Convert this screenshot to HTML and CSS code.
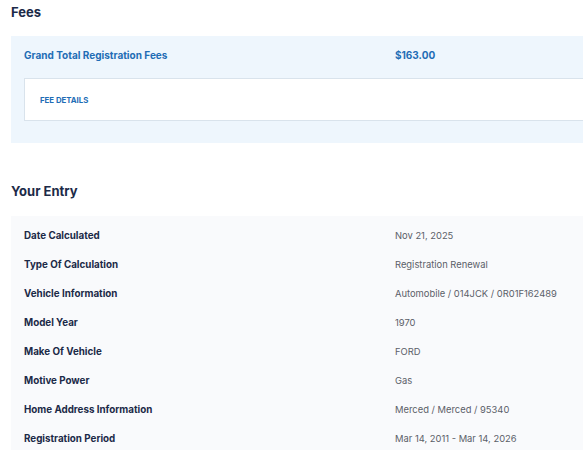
FILE: index.html
```html
<!DOCTYPE html>
<html>
<head>
<meta charset="utf-8">
<link rel="stylesheet" href="styles.css">
</head>
<body>
<div class="page">
  <h2 class="section-title">Fees</h2>
  <div class="fees-box">
    <div class="fees-row">
      <span class="fees-label">Grand Total Registration Fees</span>
      <span class="fees-value">$163.00</span>
    </div>
    <div class="fee-details">FEE DETAILS</div>
  </div>

  <h2 class="section-title entry-title">Your Entry</h2>
  <div class="entry-box">
    <div class="entry-row"><span class="entry-label">Date Calculated</span><span class="entry-value">Nov 21, 2025</span></div>
    <div class="entry-row"><span class="entry-label">Type Of Calculation</span><span class="entry-value">Registration Renewal</span></div>
    <div class="entry-row"><span class="entry-label">Vehicle Information</span><span class="entry-value">Automobile / 014JCK / 0R01F162489</span></div>
    <div class="entry-row"><span class="entry-label">Model Year</span><span class="entry-value">1970</span></div>
    <div class="entry-row"><span class="entry-label">Make Of Vehicle</span><span class="entry-value">FORD</span></div>
    <div class="entry-row"><span class="entry-label">Motive Power</span><span class="entry-value">Gas</span></div>
    <div class="entry-row"><span class="entry-label">Home Address Information</span><span class="entry-value">Merced / Merced / 95340</span></div>
    <div class="entry-row"><span class="entry-label">Registration Period</span><span class="entry-value">Mar 14, 2011 - Mar 14, 2026</span></div>
  </div>
</div>
</body>
</html>
```
FILE: styles.css
```css
html, body {
  margin: 0;
  padding: 0;
  background: #ffffff;
  overflow: hidden;
}
body {
  font-family: Inter, "Liberation Sans", sans-serif;
  color: #1c2a48;
}
.page {
  width: 800px;
  padding-left: 11px;
  padding-top: 4px;
}
.section-title {
  margin: 0;
  font-size: 13px;
  line-height: 16px;
  font-weight: 700;
  color: #1c2a48;
}
.fees-box {
  margin-top: 16px;
  background: #eef6fd;
  padding: 0 13px 22px;
}
.fees-row {
  height: 38px;
  display: flex;
  align-items: center;
  color: #1f6db5;
  font-size: 10px;
  font-weight: 700;
}
.fees-label {
  width: 371px;
}
.fee-details {
  margin-top: 4px;
  height: 41px;
  background: #ffffff;
  border: 1px solid #d9e3ec;
  border-right: none;
  display: flex;
  align-items: center;
  padding-left: 15px;
  font-size: 7.8px;
  font-weight: 700;
  color: #1f6db5;
}
.entry-title {
  margin-top: 40px;
}
.entry-box {
  margin-top: 17px;
  background: #f9fafc;
  padding: 5px 13px 0;
}
.entry-row {
  height: 29px;
  display: flex;
  align-items: center;
}
.entry-label {
  width: 371px;
  font-size: 9.8px;
  font-weight: 700;
  color: #1c2a48;
}
.entry-value {
  font-size: 9.4px;
  color: #5b6068;
}
```
